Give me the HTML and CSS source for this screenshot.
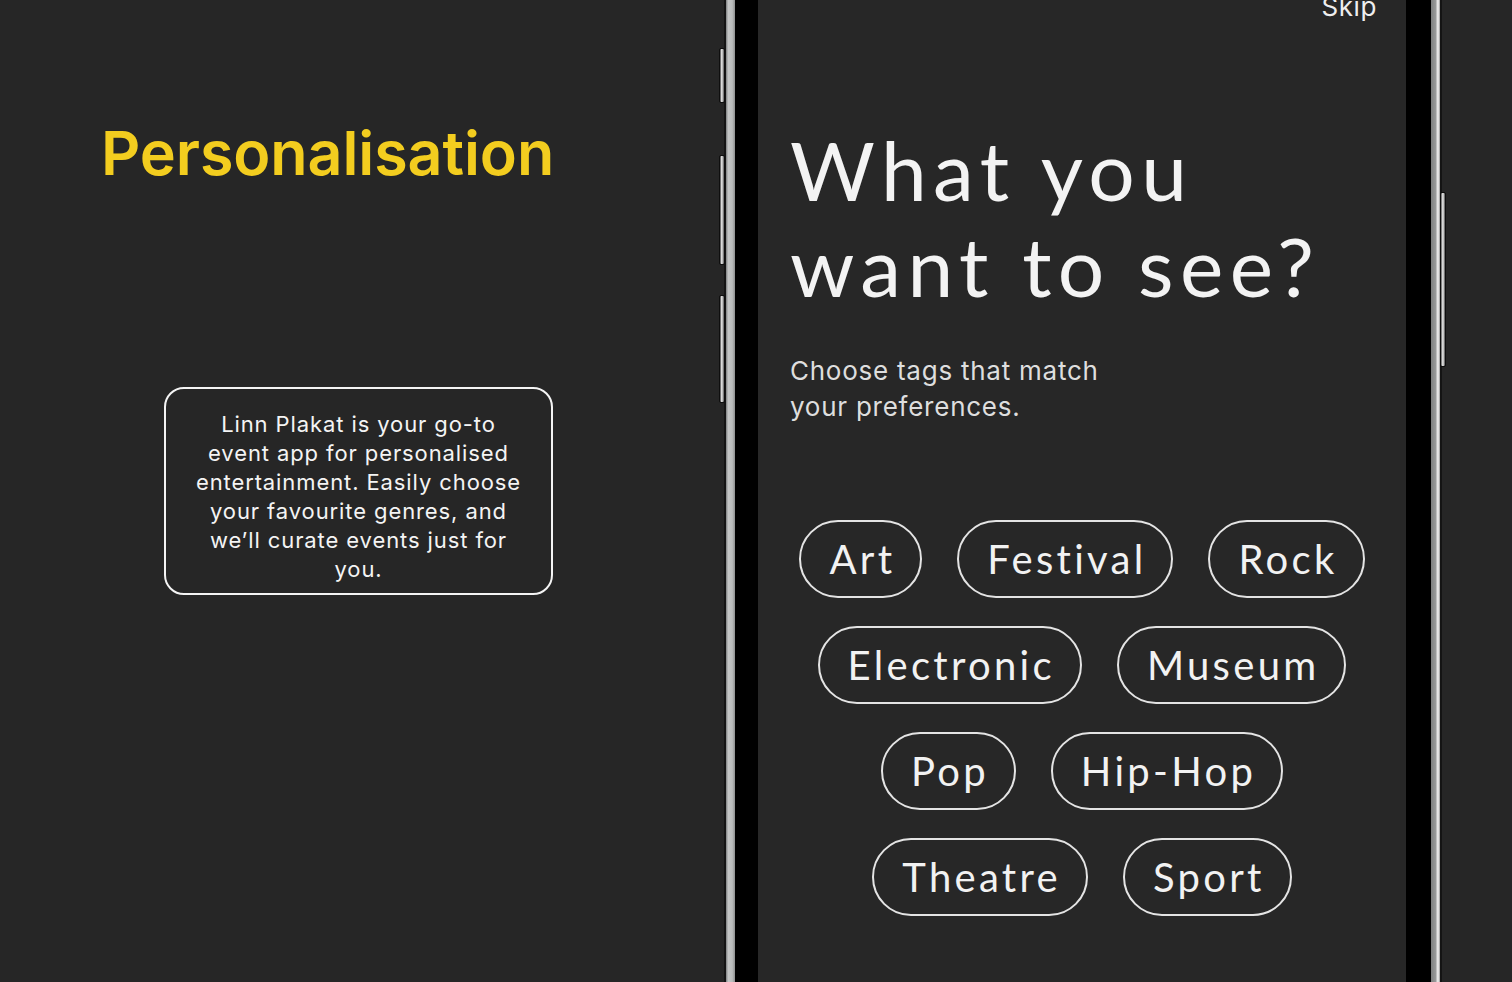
FILE: index.html
```html
<!DOCTYPE html>
<html lang="en">
<head>
<meta charset="utf-8">
<title>Personalisation</title>
<link rel="stylesheet" href="styles.css">
</head>
<body>
<main class="page">
  <section class="intro">
    <h1 class="intro-title">Personalisation</h1>
    <div class="intro-box">
      <p>Linn Plakat is your go-to event app for personalised entertainment. Easily choose your favourite genres, and we’ll curate events just for you.</p>
    </div>
  </section>

  <section class="phone">
    <span class="btn btn-l1"></span>
    <span class="btn btn-l2"></span>
    <span class="btn btn-l3"></span>
    <span class="btn btn-r1"></span>
    <div class="edge"></div>
    <div class="metal metal-left"></div>
    <div class="bezel bezel-left"></div>
    <div class="screen">
      <div class="skip">Skip</div>
      <h2 class="question">What you<br>want to see?</h2>
      <p class="subtitle">Choose tags that match<br>your preferences.</p>
      <div class="tags">
        <div class="tag-row">
          <span class="tag">Art</span>
          <span class="tag">Festival</span>
          <span class="tag">Rock</span>
        </div>
        <div class="tag-row">
          <span class="tag">Electronic</span>
          <span class="tag">Museum</span>
        </div>
        <div class="tag-row">
          <span class="tag">Pop</span>
          <span class="tag">Hip-Hop</span>
        </div>
        <div class="tag-row">
          <span class="tag">Theatre</span>
          <span class="tag">Sport</span>
        </div>
      </div>
    </div>
    <div class="bezel bezel-right"></div>
    <div class="metal metal-right"></div>
    <div class="edge"></div>
  </section>
</main>
</body>
</html>
```

FILE: styles.css
```css
* { box-sizing: border-box; }

html, body {
  margin: 0;
  padding: 0;
  background: #262626;
  height: 982px;
  overflow: hidden;
}

.page {
  display: flex;
  height: 982px;
  font-family: "Inter", "Liberation Sans", sans-serif;
}

/* Left intro panel */
.intro {
  width: 724px;
  flex: none;
  display: flex;
  flex-direction: column;
  padding-top: 115px;
}

.intro-title {
  margin: 0 0 0 101px;
  font-family: "Inter", sans-serif;
  font-weight: 600;
  font-size: 61px;
  line-height: 77px;
  color: #f3cd1f;
  letter-spacing: -0.1px;
}

.intro-box {
  margin: 195px 0 0 164px;
  width: 389px;
  height: 208px;
  border: 2px solid #f4f4f4;
  border-radius: 20px;
  padding: 21px 26px 8px;
}

.intro-box p {
  margin: 0;
  font-size: 22px;
  line-height: 29px;
  letter-spacing: 0.9px;
  color: #f4f4f4;
  text-align: center;
}

/* Phone */
.phone {
  position: relative;
  display: flex;
  flex: none;
  height: 982px;
}

.edge {
  width: 2px;
  background: #141414;
}

.metal { width: 9px; }

.metal-left {
  background: linear-gradient(to right, #7c7e7f 0%, #c4c6c6 25%, #b9bbbb 70%, #8d8f8f 100%);
}

.metal-right {
  background: linear-gradient(to right, #7e8080 0%, #999b9b 55%, #e8e8e8 68%, #dcdcdc 92%, #4a4a4a 100%);
}

.bezel { background: #000; }
.bezel-left { width: 23px; }
.bezel-right { width: 25px; }

.btn {
  position: absolute;
  width: 6px;
  border: 1px solid #0e0e0e;
  border-radius: 2px;
  background: linear-gradient(to right, #3a3a3a 0%, #e4e4e4 40%, #b0b0b0 70%, #555 100%);
}
.btn-l1 { left: -5px; top: 48px; height: 55px; }
.btn-l2 { left: -5px; top: 155px; height: 110px; }
.btn-l3 { left: -5px; top: 295px; height: 108px; }
.btn-r1 { left: 716px; top: 192px; height: 175px; background: linear-gradient(to right, #555 0%, #f0f0f0 45%, #9a9a9a 80%, #333 100%); }

/* Screen */
.screen {
  width: 648px;
  background: #272727;
  display: flex;
  flex-direction: column;
  color: #f2f2f2;
}

.skip {
  margin-top: -11px;
  padding-right: 29px;
  text-align: right;
  font-size: 26px;
  line-height: 36px;
  letter-spacing: 0.6px;
  color: #eeeeee;
}

.question {
  margin: 96px 0 0 32px;
  font-family: "Lato", sans-serif;
  font-weight: 400;
  font-size: 82px;
  line-height: 96px;
  letter-spacing: 6.4px;
  color: #f3f3f3;
}

.subtitle {
  margin: 40px 0 0 32px;
  font-size: 26px;
  line-height: 36px;
  letter-spacing: 0.75px;
  color: #dedede;
}

.tags {
  margin-top: 95px;
  display: flex;
  flex-direction: column;
  gap: 28px;
}

.tag-row {
  display: flex;
  justify-content: center;
  gap: 35px;
}

.tag {
  height: 78px;
  display: flex;
  align-items: center;
  padding: 0 25px 0 28px;
  border: 2px solid #e4e4e4;
  border-radius: 39px;
  font-family: "Lato", sans-serif;
  font-size: 40px;
  letter-spacing: 3.3px;
  color: #f2f2f2;
}
```
